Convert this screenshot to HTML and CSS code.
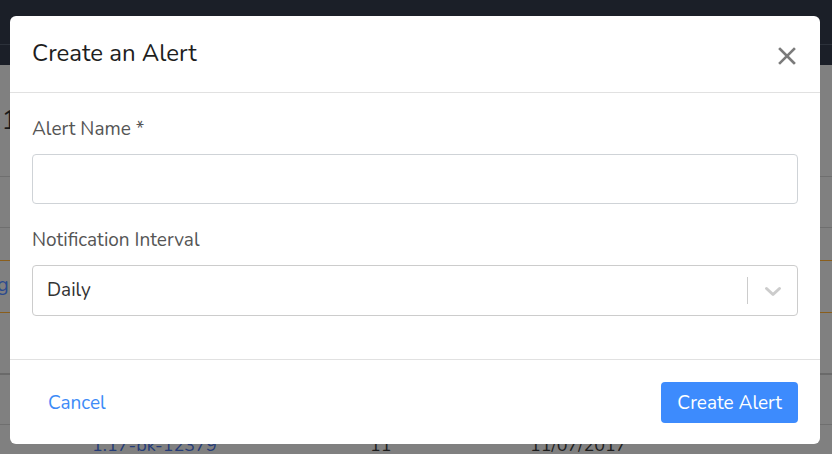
FILE: index.html
```html
<!DOCTYPE html>
<html lang="en">
<head>
<meta charset="utf-8">
<title>Create an Alert</title>
<link rel="stylesheet" href="styles.css">
</head>
<body>
<div class="page">
  <div class="navbar">
    <div class="navbar-top"></div>
    <div class="navbar-sub"></div>
  </div>
  <div class="heading"><span class="heading-text">11</span></div>
  <div class="row row-plain"></div>
  <div class="row row-a"></div>
  <div class="row row-hl"><span class="hl-text">g</span></div>
  <div class="row row-b"></div>
  <div class="row row-c"></div>
  <div class="row row-last">
    <span class="cell cell-id">1:17-bk-12379</span>
    <span class="cell cell-num">11</span>
    <span class="cell cell-date">11/07/2017</span>
  </div>
</div>

<div class="modal" role="dialog" aria-labelledby="modal-title">
  <div class="modal-header">
    <h5 class="modal-title" id="modal-title">Create an Alert</h5>
    <button class="close" type="button" aria-label="Close">
      <svg width="18" height="18" viewBox="0 0 18 18"><path d="M2 2 L16 16 M16 2 L2 16" stroke="#7b7b7b" stroke-width="2.6" stroke-linecap="square" fill="none"/></svg>
    </button>
  </div>
  <div class="modal-body">
    <div class="form-group">
      <label class="form-label" for="alert-name">Alert Name *</label>
      <input class="form-input" id="alert-name" type="text">
    </div>
    <div class="form-group">
      <label class="form-label">Notification Interval</label>
      <div class="select">
        <span class="select-value">Daily</span>
        <span class="select-sep"></span>
        <span class="select-arrow">
          <svg width="18" height="11" viewBox="0 0 18 11"><path d="M2.5 2.5 L9 8.5 L15.5 2.5" stroke="#cccccc" stroke-width="3" fill="none" stroke-linecap="round" stroke-linejoin="round"/></svg>
        </span>
      </div>
    </div>
  </div>
  <div class="modal-footer">
    <button class="btn btn-link" type="button">Cancel</button>
    <button class="btn btn-primary" type="button">Create Alert</button>
  </div>
</div>
</body>
</html>
```

FILE: styles.css
```css
* { box-sizing: border-box; }
html, body { margin: 0; padding: 0; }
body {
  width: 832px;
  height: 454px;
  overflow: hidden;
  background: #808080;
  font-family: "Nunito", "Lato", "Noto Sans", sans-serif;
}
.page { display: flex; flex-direction: column; }
.navbar { background: #1b1f28; }
.navbar-top { height: 45px; border-bottom: 1px solid #2c313a; }
.navbar-sub { height: 20px; }
.heading { height: 112px; border-bottom: 1px solid #6f6f6f; display: flex; align-items: flex-start; padding-top: 38px; }
.heading-text { font-size: 26px; color: #1a1a1a; margin-left: -14px; }
.row { border-bottom: 1px solid #6f6f6f; }
.row-plain { height: 51px; }
.row-a { height: 33px; border-bottom-color: #8a5e1c; }
.row-hl { height: 52px; border-bottom-color: #8a5e1c; display: flex; align-items: center; }
.hl-text { font-size: 20px; color: #2b4a8e; margin-left: -3px; margin-top: -4px; }
.row-b { height: 62px; border-bottom: 2px solid #6a6a6a; }
.row-c { height: 50px; }
.row-last { height: 40px; border-bottom: none; display: flex; padding-top: 8px; font-size: 18px; color: #1d1d1d; }
.cell-id { margin-left: 92px; color: #253c78; width: 278px; }
.cell-num { width: 160px; }

.modal {
  position: absolute;
  left: 10px;
  top: 16px;
  width: 810px;
  height: 428px;
  background: #fff;
  border-radius: 6px;
  display: flex;
  flex-direction: column;
}
.modal-header {
  height: 77px;
  border-bottom: 1px solid #e1e1e1;
  display: flex;
  align-items: center;
  justify-content: space-between;
  padding: 0 22px 0 22px;
}
.modal-title {
  margin: 0;
  font-size: 24px;
  font-weight: 400;
  color: #1e1e1e;
  margin-top: -2px;
}
.close {
  border: 0;
  background: none;
  padding: 0;
  width: 18px;
  height: 18px;
  margin-right: 2px;
  margin-top: 4px;
  display: flex;
}
.modal-body { padding: 22px 22px 21px; }
.form-group { margin-bottom: 22px; display: flex; flex-direction: column; }
.form-label { font-size: 19px; line-height: 27px; color: #555; margin-bottom: 12px; margin-top: 1px; }
.form-input {
  height: 50px;
  border: 1px solid #cfd3d7;
  border-radius: 4px;
  font-size: 19px;
  font-family: inherit;
  padding: 0 14px;
  margin-top: -1px;
}
.select {
  height: 51px;
  border: 1px solid #cccccc;
  border-radius: 4px;
  display: flex;
  align-items: center;
  padding-left: 14px;
  font-size: 19px;
  color: #333;
  margin-top: -1px;
}
.select-value { flex: 1; margin-top: -1px; }
.select-sep { width: 1px; height: 27px; background: #cccccc; }
.select-arrow { width: 49px; display: flex; justify-content: center; align-items: center; padding-top: 2px; }
.modal-footer {
  flex: 1;
  border-top: 1px solid #e1e1e1;
  display: flex;
  justify-content: space-between;
  align-items: flex-start;
  padding: 22px 22px 0;
}
.btn {
  font-family: inherit;
  font-size: 19px;
  border: 0;
  border-radius: 4px;
  height: 41px;
  padding: 0 16px;
  background: none;
  cursor: pointer;
}
.btn-link { color: #3d8bf7; padding-left: 16px; }
.btn-primary { background: #3d8bfd; color: #fff; }
```
